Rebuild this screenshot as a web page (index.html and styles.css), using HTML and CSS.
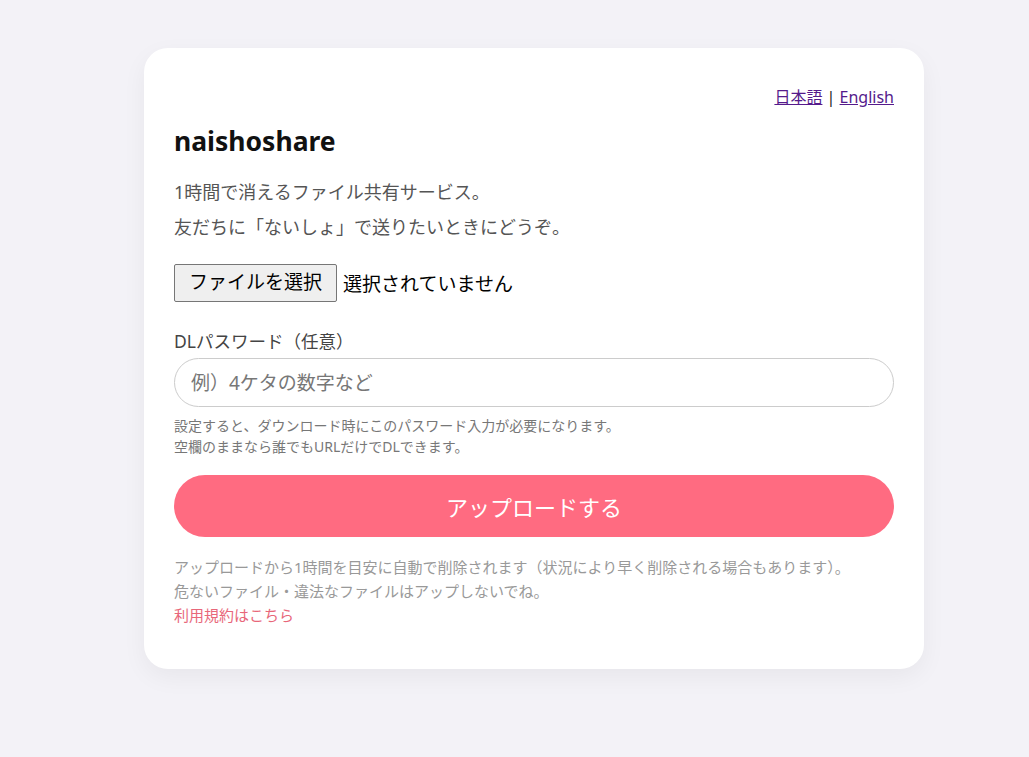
FILE: index.html
```html
<!DOCTYPE html>
<html lang="ja">

<head>
    <meta charset="utf-8">
    <title>naishoshare</title>
    <meta name="viewport" content="width=device-width,initial-scale=1">
    <link rel="stylesheet" href="styles.css">
</head>

<body>
    <main class="card">
        <div class="lang">
            <a href="#" class="lang-link">日本語</a> | <a href="#" class="lang-link">English</a>
        </div>
        <h1 class="title">naishoshare</h1>
        <p class="lead">1時間で消えるファイル共有サービス。</p>
        <p class="lead">友だちに「ないしょ」で送りたいときにどうぞ。</p>

        <form class="upload">
            <div class="file-row">
                <label class="file-btn">ファイルを選択<input type="file" class="file-input"></label>
                <span class="file-name">選択されていません</span>
            </div>

            <label class="field-label" for="pw">DLパスワード（任意）</label>
            <input id="pw" class="pw-input" type="text" placeholder="例）4ケタの数字など">
            <p class="hint">設定すると、ダウンロード時にこのパスワード入力が必要になります。<br>空欄のままなら誰でもURLだけでDLできます。</p>

            <button type="button" class="submit">アップロードする</button>
        </form>

        <p class="note">アップロードから1時間を目安に自動で削除されます（状況により早く削除される場合もあります）。<br>危ないファイル・違法なファイルはアップしないでね。<br><a href="#" class="terms">利用規約はこちら</a></p>
    </main>
</body>

</html>
```

FILE: styles.css
```css
body {
    margin: 0;
    padding: 48px 0 60px 144px;
    background-color: #f3f2f7;
    font-family: "Noto Sans", "Noto Sans CJK JP", sans-serif;
    color: #222;
}

/* white card in the middle */
.card {
    width: 780px;
    box-sizing: border-box;
    padding: 30px 30px 42px;
    background-color: #fff;
    border-radius: 24px;
    box-shadow: 0 8px 24px rgba(0, 0, 0, 0.05);
}

.lang {
    text-align: right;
    font-size: 16px;
    line-height: 38px;
    color: #222;
}

.lang-link {
    color: #551a8b;
}

.title {
    margin: 5px 0 14px;
    font-size: 26.5px;
    font-weight: 700;
    line-height: 40px;
    color: #111;
}

.lead {
    margin: 0;
    font-size: 18px;
    line-height: 35px;
    color: #555;
}

.upload {
    margin-top: 19px;
}

.file-row {
    display: flex;
    align-items: center;
    gap: 6px;
    height: 38px;
}

.file-btn {
    display: inline-block;
    box-sizing: border-box;
    height: 38px;
    padding: 0 14px;
    font-size: 19px;
    line-height: 35px;
    color: #000;
    background-color: #efefef;
    border: 1px solid #767676;
    border-radius: 2px;
}

.file-input {
    display: none;
}

.file-name {
    font-size: 19px;
    color: #000;
}

.field-label {
    display: block;
    margin-top: 25px;
    font-size: 17.5px;
    line-height: 28px;
    color: #444;
}

.pw-input {
    display: block;
    width: 100%;
    box-sizing: border-box;
    height: 49px;
    margin-top: 3px;
    padding: 0 16px;
    font-family: inherit;
    font-size: 19px;
    border: 1px solid #ccc;
    border-radius: 25px;
    outline: none;
}

.pw-input::placeholder {
    color: #777;
}

.hint {
    margin: 8px 0 0;
    font-size: 14px;
    line-height: 21px;
    color: #777;
}

.submit {
    display: block;
    width: 100%;
    height: 62px;
    margin-top: 18px;
    font-family: inherit;
    font-size: 22px;
    color: #fff;
    background-color: #ff6b81;
    border: none;
    border-radius: 31px;
}

.note {
    margin: 18px 0 0;
    font-size: 15px;
    line-height: 24px;
    color: #999;
}

.terms {
    color: #e8677a;
    text-decoration: none;
}
```
